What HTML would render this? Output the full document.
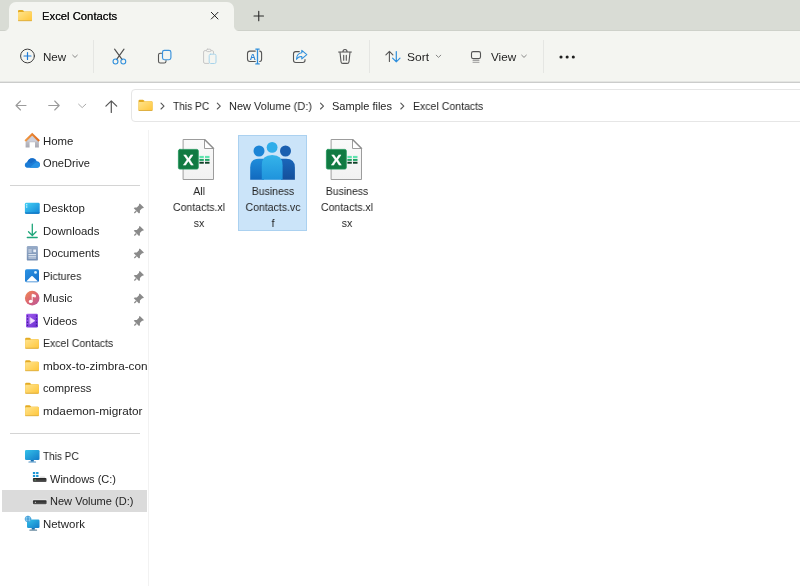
<!DOCTYPE html>
<html lang="en">
<head>
<meta charset="utf-8">
<title>Excel Contacts</title>
<style>
*{box-sizing:border-box;margin:0;padding:0}
html,body{width:800px;height:586px;overflow:hidden;background:#fff}
body{font-family:"Liberation Sans",sans-serif;font-size:11px;color:#242424;position:relative}
.abs{position:absolute}
.t{will-change:transform;position:absolute;white-space:nowrap;line-height:14px;height:14px;transform-origin:0 50%}
.sx{display:inline-block;transform-origin:0 50%;white-space:nowrap}
#titlebar{left:0;top:0;width:800px;height:31px;background:#d9dcd5;border-bottom:1px solid #ced1ca}
#tab{left:9px;top:2px;width:225px;height:30px;background:#f4f5f1;border-radius:7px 7px 0 0}
#tabcl{left:4px;top:26px;width:5px;height:5px;background:radial-gradient(circle at 0 0,rgba(244,245,241,0) 4.5px,#f4f5f1 5.5px)}
#tabcr{left:234px;top:26px;width:5px;height:5px;background:radial-gradient(circle at 100% 0,rgba(244,245,241,0) 4.5px,#f4f5f1 5.5px)}
#toolbar{left:0;top:31px;width:800px;height:51px;background:#f4f5f1}
#tbline{left:0;top:81px;width:800px;height:2px;background:linear-gradient(#e4e5e2 0 50%,#cbcccb 50% 100%)}
.vsep{position:absolute;width:1px;background:#e5e6e3;top:40px;height:33px}
#addr{left:131px;top:89px;width:680px;height:33px;border:1px solid #e6e6e6;border-radius:4px;background:#fff}
#splitter{left:148px;top:130px;width:1px;height:456px;background:#f2f2f2}
.hsep{position:absolute;left:10px;width:130px;height:1px;background:#d4d4d4}
#selrow{left:2px;top:490px;width:145px;height:22px;background:#dbdbdb}
#selfile{left:238px;top:135px;width:69px;height:96px;background:#cbe4f9;border:1px solid #abd1f0}
.fl{will-change:transform;position:absolute;width:80px;text-align:center;line-height:16px;font-size:11px;color:#242424;transform:scaleX(.955);transform-origin:50% 50%}
#icons{will-change:transform;position:absolute;left:0;top:0;width:800px;height:586px;overflow:visible}
</style>
</head>
<body>
<div id="titlebar" class="abs"></div>
<div id="tab" class="abs"></div><div id="tabcl" class="abs"></div><div id="tabcr" class="abs"></div>
<div id="toolbar" class="abs"></div>
<div id="tbline" class="abs"></div>
<div class="vsep" style="left:93px"></div>
<div class="vsep" style="left:369px"></div>
<div class="vsep" style="left:543px"></div>
<div id="addr" class="abs"></div>
<div id="splitter" class="abs"></div>
<div class="hsep" style="top:185px"></div>
<div class="hsep" style="top:433px"></div>
<div id="selrow" class="abs"></div>
<div id="selfile" class="abs"></div>

<span class="t" style="left:42.4px;top:9px;transform:scaleX(1.025);color:#111;text-shadow:0 0 .4px #222">Excel Contacts</span>
<span class="t" style="left:43.1px;top:49.5px;transform:scaleX(1.054)">New</span>
<span class="t" style="left:407.4px;top:49.5px;transform:scaleX(1.090)">Sort</span>
<span class="t" style="left:490.6px;top:49.5px;transform:scaleX(1.065)">View</span>
<span class="t" style="left:172.5px;top:99.2px;transform:scaleX(0.925)">This PC</span>
<span class="t" style="left:229.0px;top:99.2px;transform:scaleX(0.997)">New Volume (D:)</span>
<span class="t" style="left:331.9px;top:99.2px;transform:scaleX(1.001)">Sample files</span>
<span class="t" style="left:412.5px;top:99.2px;transform:scaleX(0.959)">Excel Contacts</span>
<span class="t" style="left:43.2px;top:134.2px;transform:scaleX(1.036)">Home</span>
<span class="t" style="left:42.6px;top:156.2px;transform:scaleX(1.011)">OneDrive</span>
<span class="t" style="left:43.2px;top:201.2px;transform:scaleX(1.038)">Desktop</span>
<span class="t" style="left:43.2px;top:224.2px;transform:scaleX(1.036)">Downloads</span>
<span class="t" style="left:43.2px;top:246.2px;transform:scaleX(1.023)">Documents</span>
<span class="t" style="left:43.2px;top:269.2px;transform:scaleX(0.966)">Pictures</span>
<span class="t" style="left:43.2px;top:291.2px;transform:scaleX(1.023)">Music</span>
<span class="t" style="left:42.9px;top:314.2px;transform:scaleX(1.023)">Videos</span>
<span class="t" style="left:43.2px;top:336.2px;transform:scaleX(0.959)">Excel Contacts</span>
<span class="t" style="left:43.2px;top:359.2px;transform:scaleX(1.069)">mbox-to-zimbra-con</span>
<span class="t" style="left:43.2px;top:381.2px;transform:scaleX(1.015)">compress</span>
<span class="t" style="left:43.2px;top:404.2px;transform:scaleX(1.070)">mdaemon-migrator</span>
<span class="t" style="left:43.0px;top:449.2px;transform:scaleX(0.912)">This PC</span>
<span class="t" style="left:50.0px;top:472.2px;transform:scaleX(1.000)">Windows (C:)</span>
<span class="t" style="left:50.2px;top:494.2px;transform:scaleX(1.003)">New Volume (D:)</span>
<span class="t" style="left:43.2px;top:517.2px;transform:scaleX(1.039)">Network</span>

<div class="fl" style="left:159px;top:183px">All<br>Contacts.xl<br>sx</div>
<div class="fl" style="left:232.7px;top:183px">Business<br>Contacts.vc<br>f</div>
<div class="fl" style="left:306.8px;top:183px">Business<br>Contacts.xl<br>sx</div>

<svg id="icons" viewBox="0 0 800 586" width="800" height="586" fill="none" stroke-linecap="round" stroke-linejoin="round">
<defs>
  <linearGradient id="gFold" x1="0" y1="0" x2="1" y2="1"><stop offset="0" stop-color="#ffe48f"/><stop offset="1" stop-color="#ffc63a"/></linearGradient>
  <symbol id="folder" viewBox="0 0 14 11" overflow="visible">
    <path d="M0 1.1Q0 0 1.1 0H4.4Q4.9 0 5.3.4L6.3 1.4H12.9Q14 1.4 14 2.5V9.9Q14 11 12.9 11H1.1Q0 11 0 9.900z" fill="#e4ab22" stroke="none"/>
    <path d="M0 3.1Q0 2.1 1 2.1H4.700Q5.200 2.100 5.600 1.800L6.300 1.400H12.900Q14 1.400 14 2.500V9.900Q14 11 12.900 11H1.100Q0 11 0 9.900z" fill="url(#gFold)" stroke="none"/>
    <path d="M.6 10.700H13.400" stroke="#dcae42" stroke-width=".9"/>
  </symbol>
  <linearGradient id="gDesk" x1="0" y1="0" x2="1" y2="1"><stop offset="0" stop-color="#43d0f5"/><stop offset="1" stop-color="#1285d6"/></linearGradient>
  <linearGradient id="gDoc" x1="0" y1="0" x2="0" y2="1"><stop offset="0" stop-color="#98acc8"/><stop offset="1" stop-color="#758fb3"/></linearGradient>
  <linearGradient id="gPic" x1="0" y1="0" x2="1" y2="1"><stop offset="0" stop-color="#2c93e4"/><stop offset="1" stop-color="#166fc8"/></linearGradient>
  <linearGradient id="gMus" x1="0" y1="0" x2="1" y2="1"><stop offset="0" stop-color="#f08a52"/><stop offset=".5" stop-color="#dc6672"/><stop offset="1" stop-color="#b8589c"/></linearGradient>
  <linearGradient id="gVid" x1="0" y1="0" x2="1" y2="1"><stop offset="0" stop-color="#a35cf0"/><stop offset="1" stop-color="#6a2ed0"/></linearGradient>
  <linearGradient id="gRoof" x1="0" y1="0" x2="1" y2="0"><stop offset="0" stop-color="#f09a45"/><stop offset="1" stop-color="#de6a1e"/></linearGradient>
  <linearGradient id="gHouse" x1="0" y1="0" x2="0" y2="1"><stop offset="0" stop-color="#d4d4da"/><stop offset="1" stop-color="#a9a9b2"/></linearGradient>
  <linearGradient id="gPage" x1="0" y1="0" x2="0" y2="1"><stop offset="0" stop-color="#fafafa"/><stop offset="1" stop-color="#f1f1f1"/></linearGradient>
  <linearGradient id="gPc" x1="0" y1="0" x2="1" y2="1"><stop offset="0" stop-color="#34c2ea"/><stop offset="1" stop-color="#127bc8"/></linearGradient>
  <linearGradient id="gP1" x1="0" y1="0" x2="0" y2="1"><stop offset="0" stop-color="#35b4ea"/><stop offset="1" stop-color="#1f93dc"/></linearGradient>
  <linearGradient id="gP2" x1="0" y1="0" x2="0" y2="1"><stop offset="0" stop-color="#1f8ddb"/><stop offset="1" stop-color="#1169be"/></linearGradient>
  <linearGradient id="gP3" x1="0" y1="0" x2="0" y2="1"><stop offset="0" stop-color="#1a66ba"/><stop offset="1" stop-color="#144f9b"/></linearGradient>
  <linearGradient id="gDrv" x1="0" y1="0" x2="0" y2="1"><stop offset="0" stop-color="#242424"/><stop offset="1" stop-color="#565656"/></linearGradient>
  <g id="pin"><g transform="rotate(45)"><path d="M-2.900-5H2.900V-3.900L2.200-3.200V-.1L3.700 1.400V2.700H-3.700V1.400L-2.200-.1V-3.200L-2.900-3.900z" fill="#8a8a8a" stroke="none"/><path d="M0 2.700V5.600" stroke="#8a8a8a" stroke-width="1.200" stroke-linecap="butt"/></g></g>

</defs>

<!-- ===== tab ===== -->
<use href="#folder" x="18" y="10" width="14" height="11"/>
<path d="M211.300 12.300L218 19M218 12.300L211.300 19" stroke="#222" stroke-width="1"/>
<path d="M254 16H263.500M258.750 11.250V20.750" stroke="#2b2b2b" stroke-width="1.100"/>

<!-- ===== toolbar ===== -->
<circle cx="27.500" cy="56" r="6.900" stroke="#3d3d3d" stroke-width="1"/>
<path d="M24 56H31M27.500 52.500V59.500" stroke="#1f7bd6" stroke-width="1.200"/>
<path d="M72.700 55.200L75 57.400L77.300 55.200" stroke="#7a7a7a" stroke-width=".9"/>
<!-- cut -->
<path d="M114.600 49.200L122.200 59.600M124 49.200L116.500 59.600" stroke="#505050" stroke-width="1.150"/>
<circle cx="115.500" cy="61.500" r="2.450" stroke="#2f8fdc" stroke-width="1.100"/>
<circle cx="123.300" cy="61.500" r="2.450" stroke="#2f8fdc" stroke-width="1.100"/>
<!-- copy -->
<path d="M161.500 53.300H160.300Q158.500 53.300 158.500 55.100V61.200Q158.500 63 160.300 63H164.200Q166 63 166 61.200V60.600" stroke="#555" stroke-width="1.100"/>
<rect x="162.500" y="50.400" width="8.400" height="9.300" rx="1.900" stroke="#3a92dc" stroke-width="1.150"/>
<!-- paste (disabled) -->
<path d="M206.500 50.600H205Q203.600 50.600 203.600 52V62Q203.600 63.400 205 63.400H208.600M211 50.600H212.300Q213.500 50.600 213.500 52V53.500" stroke="#c6c6c6" stroke-width="1"/>
<rect x="206.400" y="49.200" width="4.700" height="2.400" rx="1.200" stroke="#c6c6c6" stroke-width="1"/>
<rect x="209.200" y="54.200" width="6.800" height="9.300" rx="1.400" stroke="#a7d3ea" stroke-width="1" fill="#f4f5f1"/>
<!-- rename -->
<path d="M255.300 51.100H250Q247.500 51.100 247.500 53.600V59Q247.500 61.500 250 61.500H255.300M259.700 51.100H259.800Q261.600 51.100 261.600 53.600V59Q261.600 61.500 259.800 61.500H259.700" stroke="#555" stroke-width="1.100"/>
<path d="M257.500 49.300V63.700M255.800 49.100H259.200M255.800 63.900H259.200" stroke="#2f8fdc" stroke-width="1.300"/>
<text x="252.700" y="59.500" text-anchor="middle" font-family="Liberation Sans, sans-serif" font-weight="bold" font-size="8.400" fill="#2a84d6" stroke="none">A</text>
<!-- share -->
<path d="M299.300 51.600H295.700Q293.500 51.600 293.500 53.800V60.300Q293.500 62.500 295.700 62.500H302.800Q305 62.500 305 60.300V59.500" stroke="#555" stroke-width="1.100"/>
<path d="M301.800 50.300L306.800 54.600L301.800 58.900V56.500Q298.400 56.200 296.500 59.300Q296.600 53.500 301.800 52.800z" stroke="#2f8fdc" stroke-width="1.100"/>
<!-- delete -->
<path d="M338.600 52H351.400M342.900 52Q342.900 49.500 345 49.500Q347.100 49.500 347.100 52M340 52.200L341 61.700Q341.200 63.400 342.900 63.400H347.100Q348.800 63.400 349 61.700L350 52.200M343.700 55.200V60.300M346.300 55.200V60.300" stroke="#555" stroke-width="1.100"/>
<!-- sort -->
<path d="M389.400 61.400V51.400M385.900 54.900L389.400 51.400L392.900 54.900" stroke="#555" stroke-width="1.100"/>
<path d="M396.300 51.600V61.800M392.600 58.100L396.300 61.800L400 58.100" stroke="#2f8fdc" stroke-width="1.200"/>
<path d="M436.200 55.200L438.500 57.400L440.800 55.200" stroke="#7a7a7a" stroke-width=".9"/>
<!-- view -->
<rect x="471.500" y="51.600" width="9" height="7" rx="1.600" stroke="#555" stroke-width="1.100"/>
<path d="M473 60.400H479M473 62.300H479" stroke="#9a9a9a" stroke-width="1"/>
<path d="M521.700 55.200L524 57.400L526.300 55.200" stroke="#7a7a7a" stroke-width=".9"/>
<!-- more -->
<circle cx="561" cy="57" r="1.550" fill="#1f1f1f" stroke="none"/><circle cx="567.150" cy="57" r="1.550" fill="#1f1f1f" stroke="none"/><circle cx="573.300" cy="57" r="1.550" fill="#1f1f1f" stroke="none"/>

<!-- ===== nav ===== -->
<path d="M26 105.500H16M20.500 101L16 105.500L20.500 110" stroke="#9b9b9b" stroke-width="1.100"/>
<path d="M48.700 105.500H59.200M54.700 101L59.200 105.500L54.700 110" stroke="#9b9b9b" stroke-width="1.100"/>
<path d="M78.600 104.200L82.200 107.600L85.800 104.200" stroke="#aaa" stroke-width="1"/>
<path d="M111.300 112.500V100.800M105.900 106.200L111.300 100.800L116.700 106.200" stroke="#555" stroke-width="1.200"/>
<use href="#folder" x="138.500" y="99.700" width="14" height="11.200"/>
<path d="M161 103.200L164 106.100L161 109" stroke="#555" stroke-width="1.100"/>
<path d="M217.300 103.200L220.300 106.100L217.300 109" stroke="#555" stroke-width="1.100"/>
<path d="M320.500 103.200L323.500 106.100L320.500 109" stroke="#555" stroke-width="1.100"/>
<path d="M400.800 103.200L403.800 106.100L400.800 109" stroke="#555" stroke-width="1.100"/>
<!-- ===== sidebar icons ===== -->
<!-- home -->
<path d="M25.600 141.600L32.200 135.400L38.900 141.600V147.500H35V142.300H29.600V147.500H25.600z" fill="url(#gHouse)" stroke="none"/>
<path d="M27 141.600L32.200 136.600L37.500 141.600z" fill="#cdd0dc" stroke="none"/>
<path d="M25.200 141L32.200 134.200L39.200 141" stroke="url(#gRoof)" stroke-width="2.100" stroke-linecap="butt" stroke-linejoin="miter"/>
<!-- onedrive -->
<path d="M28.200 167.700Q24.800 167.700 24.800 164.900Q24.800 162.500 27.300 162.100Q28.500 158.300 32.300 158.300Q35.500 158.300 36.700 161.300Q40 161.600 40 164.600Q40 167.700 36.800 167.700z" fill="#1b7cd6" stroke="none"/>
<path d="M29.500 167.700L35 163Q37.500 161.300 40 164Q40.300 167.700 36.800 167.700z" fill="#2791e4" stroke="none"/>
<path d="M27.300 162.100Q28.500 158.300 32.300 158.300Q34.500 158.300 35.800 160L31 163.500Q29 162 27.300 162.100z" fill="#166dc9" stroke="none"/>
<!-- desktop -->
<rect x="24.900" y="202.800" width="14.800" height="11" rx="1.400" fill="url(#gDesk)" stroke="none"/>
<path d="M24.900 212.600H39.700Q39.700 213.800 38.300 213.800H26.300Q24.900 213.800 24.900 212.600z" fill="#0f74c2" stroke="none"/>
<rect x="26.100" y="204.200" width="1.200" height="1.200" fill="#e8f8ff" stroke="none"/><rect x="26.100" y="206.400" width="1.200" height="1.200" fill="#e8f8ff" stroke="none"/>
<!-- downloads -->
<path d="M32.300 224.200V235.200M28.500 231.700L32.300 235.500L36.100 231.700M27.300 237.500H37.200" stroke="#1fa67a" stroke-width="1.300"/>
<!-- documents -->
<rect x="26.800" y="246" width="11.100" height="14.600" rx="1.200" fill="url(#gDoc)" stroke="none"/>
<rect x="33.300" y="249.500" width="2.700" height="2.700" fill="#e9eff8" stroke="none"/>
<path d="M28.400 250H31.700M28.400 252H31.700M28.400 254.500H36.100M28.400 256.300H36.100M28.400 258H36.100" stroke="#e6ecf5" stroke-width=".9" stroke-linecap="butt"/>
<!-- pictures -->
<rect x="25" y="269.300" width="14" height="12.900" rx="1.600" fill="url(#gPic)" stroke="none"/>
<path d="M26.200 281.500L31.300 276.200Q32 275.600 32.700 276.200L38 281.500z" fill="#fff" stroke="none"/>
<circle cx="35.500" cy="272.400" r="1.400" fill="#d5f0ff" stroke="none"/>
<!-- music -->
<circle cx="32.200" cy="298.100" r="7.300" fill="url(#gMus)" stroke="none"/>
<ellipse cx="30.700" cy="301.400" rx="1.900" ry="1.700" fill="#fff" stroke="none"/>
<path d="M32.200 301.400V294.300L35.400 295.200V297.100L32.200 296.200" stroke="#fff" stroke-width=".9" fill="#fff"/>
<!-- videos -->
<rect x="26.100" y="313.800" width="11.800" height="13.700" rx="1.300" fill="url(#gVid)" stroke="none"/>
<g fill="#3d1a98" stroke="none"><circle cx="27.500" cy="316" r=".75"/><circle cx="27.500" cy="319.100" r=".75"/><circle cx="27.500" cy="322.200" r=".75"/><circle cx="27.500" cy="325.300" r=".75"/><circle cx="36.500" cy="316" r=".75"/><circle cx="36.500" cy="319.100" r=".75"/><circle cx="36.500" cy="322.200" r=".75"/><circle cx="36.500" cy="325.300" r=".75"/></g>
<path d="M30.200 317.700L34.900 320.700L30.200 323.700z" fill="#f3e2ff" stroke="#f3e2ff" stroke-width=".6"/>
<!-- pins -->
<use href="#pin" x="138.300" y="209.05"/><use href="#pin" x="138.300" y="231.55"/><use href="#pin" x="138.300" y="254.05"/><use href="#pin" x="138.300" y="276.55"/><use href="#pin" x="138.300" y="299.05"/><use href="#pin" x="138.300" y="321.55"/>
<!-- folders -->
<use href="#folder" x="25" y="337.800" width="14" height="10.700"/>
<use href="#folder" x="25" y="360.300" width="14" height="10.700"/>
<use href="#folder" x="25" y="382.800" width="14" height="10.700"/>
<use href="#folder" x="25" y="405.300" width="14" height="10.700"/>
<!-- this pc -->
<rect x="25" y="450" width="14.500" height="10" rx="1.300" fill="url(#gPc)" stroke="none"/>
<rect x="30.700" y="460" width="3.100" height="1.600" fill="#1a6fb0" stroke="none"/>
<rect x="28.400" y="461.400" width="7.700" height="1.200" rx=".5" fill="#4a90c4" stroke="none"/>
<!-- windows c -->
<g fill="#1c96d4" stroke="none"><rect x="32.900" y="472" width="2.300" height="2.100"/><rect x="36.100" y="472" width="2.400" height="2.100"/><rect x="32.900" y="475" width="2.300" height="2"/><rect x="36.100" y="475" width="2.400" height="2"/></g>
<path d="M39.500 477.900L40.300 476.500H44.500L45.600 477.900z" fill="#dedede" stroke="none"/>
<rect x="32.900" y="478" width="13.600" height="3.900" rx=".9" fill="url(#gDrv)" stroke="none"/>
<rect x="34.700" y="479.400" width="1" height="1" fill="#6ad06a" stroke="none"/>
<!-- new volume d -->
<rect x="32.300" y="499.300" width="14.900" height="5.900" rx="1.300" fill="#e7e7e7" stroke="none"/>
<rect x="32.900" y="500.200" width="13.700" height="4" rx=".9" fill="url(#gDrv)" stroke="none"/>
<rect x="34.900" y="501.800" width="1" height="1" fill="#e8e8e8" stroke="none"/>
<!-- network -->
<rect x="27" y="519.500" width="12.500" height="8.500" rx="1.200" fill="url(#gPc)" stroke="none"/>
<rect x="31.700" y="528" width="3.100" height="1.700" fill="#1a6fb0" stroke="none"/>
<rect x="29.400" y="529.500" width="7.700" height="1.200" rx=".5" fill="#6a8aa0" stroke="none"/>
<circle cx="28" cy="519" r="2.900" fill="#8fd3f4" stroke="#3f9fd8" stroke-width=".7"/>
<path d="M25.300 519H30.700M28 516.300Q26.600 519 28 521.700M28 516.300Q29.400 519 28 521.700" stroke="#2b86c8" stroke-width=".5"/>

<!-- ===== files ===== -->
<g transform="translate(178 139)">
    <path d="M5.500 .5H26.500L35.500 9.500V40.500H5.500z" fill="url(#gPage)" stroke="#9c9c9c" stroke-width="1" stroke-linejoin="miter"/>
    <path d="M26.500 .5V9.500H35.500z" fill="#fff" stroke="#9c9c9c" stroke-width="1" stroke-linejoin="miter"/>
    <path d="M26.500 .5L35.500 9.500" stroke="#8c8c8c" stroke-width="1.300" stroke-linecap="butt"/>
    <rect x="21.400" y="16.900" width="4.400" height="2.100" fill="#5fe3ae" stroke="none"/><rect x="27" y="16.900" width="4.500" height="2.100" fill="#5fe3ae" stroke="none"/>
    <rect x="21.400" y="19.900" width="4.400" height="2" fill="#21a366" stroke="none"/><rect x="27" y="19.900" width="4.500" height="2" fill="#21a366" stroke="none"/>
    <rect x="21.400" y="22.800" width="4.400" height="1.900" fill="#0b3f25" stroke="none"/><rect x="27" y="22.800" width="4.500" height="1.900" fill="#0b3f25" stroke="none"/>
    <rect x=".4" y="10.400" width="19.900" height="19.700" rx="1.500" fill="#117a42" stroke="#21965a" stroke-width=".8"/>
    <text x="10.400" y="25.600" text-anchor="middle" font-family="Liberation Sans, sans-serif" font-weight="bold" font-size="15.300" fill="#fff" stroke="#fff" stroke-width=".35">X</text>
  </g>
<g transform="translate(326 139)">
    <path d="M5.500 .5H26.500L35.500 9.500V40.500H5.500z" fill="url(#gPage)" stroke="#9c9c9c" stroke-width="1" stroke-linejoin="miter"/>
    <path d="M26.500 .5V9.500H35.500z" fill="#fff" stroke="#9c9c9c" stroke-width="1" stroke-linejoin="miter"/>
    <path d="M26.500 .5L35.500 9.500" stroke="#8c8c8c" stroke-width="1.300" stroke-linecap="butt"/>
    <rect x="21.400" y="16.900" width="4.400" height="2.100" fill="#5fe3ae" stroke="none"/><rect x="27" y="16.900" width="4.500" height="2.100" fill="#5fe3ae" stroke="none"/>
    <rect x="21.400" y="19.900" width="4.400" height="2" fill="#21a366" stroke="none"/><rect x="27" y="19.900" width="4.500" height="2" fill="#21a366" stroke="none"/>
    <rect x="21.400" y="22.800" width="4.400" height="1.900" fill="#0b3f25" stroke="none"/><rect x="27" y="22.800" width="4.500" height="1.900" fill="#0b3f25" stroke="none"/>
    <rect x=".4" y="10.400" width="19.900" height="19.700" rx="1.500" fill="#117a42" stroke="#21965a" stroke-width=".8"/>
    <text x="10.400" y="25.600" text-anchor="middle" font-family="Liberation Sans, sans-serif" font-weight="bold" font-size="15.300" fill="#fff" stroke="#fff" stroke-width=".35">X</text>
  </g>
<!-- contacts / people -->
<path d="M250.200 179.700V167.500Q250.200 158.800 258.900 158.800H264V179.700z" fill="url(#gP2)" stroke="none"/>
<path d="M294.900 179.700V167.500Q294.900 158.800 286.200 158.800H281V179.700z" fill="url(#gP3)" stroke="none"/>
<circle cx="259" cy="151" r="5.500" fill="#1c84d6" stroke="none"/>
<circle cx="285.500" cy="151" r="5.500" fill="#1a5fb0" stroke="none"/>
<path d="M261.800 179.700V165.200Q261.800 155.100 272.200 155.100Q282.600 155.100 282.600 165.200V179.700z" fill="url(#gP1)" stroke="none"/>
<circle cx="272.100" cy="147.400" r="5.400" fill="#2fadea" stroke="none"/>

</svg>

</body>
</html>
